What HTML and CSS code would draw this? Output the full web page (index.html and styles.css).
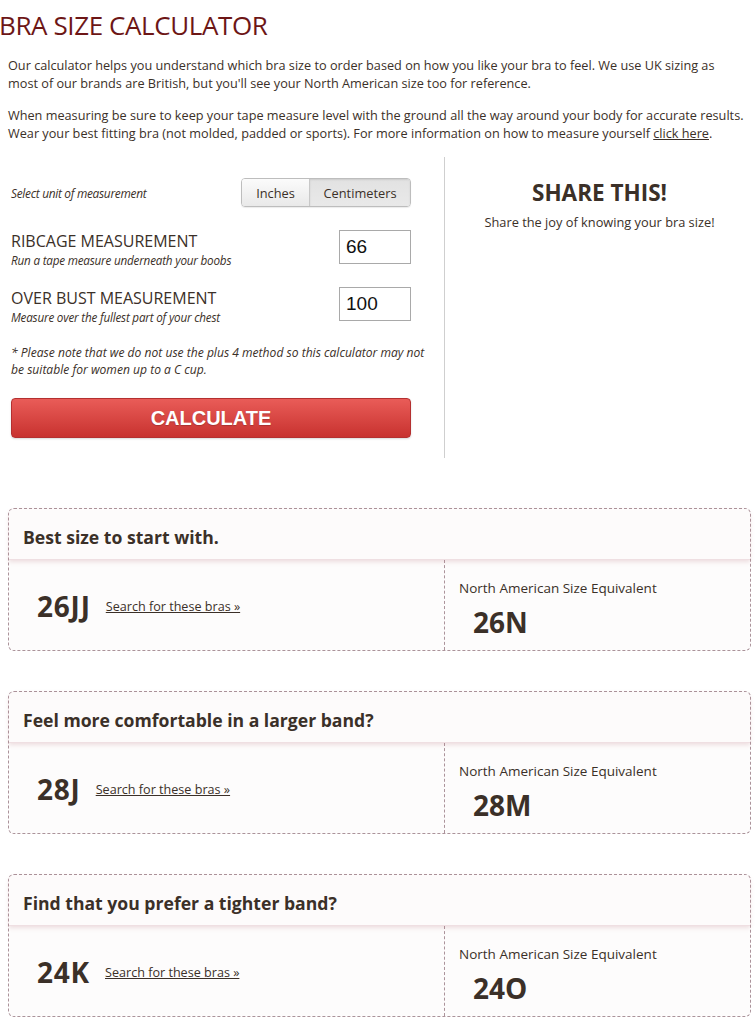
FILE: index.html
```html
<!DOCTYPE html>
<html>
<head>
<meta charset="utf-8">
<link rel="stylesheet" href="styles.css">
</head>
<body>
<div class="page">
  <h1 class="title">BRA SIZE CALCULATOR</h1>
  <p class="intro">Our calculator helps you understand which bra size to order based on how you like your bra to feel. We use UK sizing as<br>most of our brands are British, but you'll see your North American size too for reference.</p>
  <p class="intro">When measuring be sure to keep your tape measure level with the ground all the way around your body for accurate results.<br>Wear your best fitting bra (not molded, padded or sports). For more information on how to measure yourself <a href="#">click here</a>.</p>

  <div class="calc">
    <div class="calc-form">
      <div class="unit-row">
        <span class="unit-label">Select unit of measurement</span>
        <div class="toggle">
          <span class="toggle-btn">Inches</span>
          <span class="toggle-btn active">Centimeters</span>
        </div>
      </div>
      <div class="field">
        <div class="field-text">
          <div class="field-name">RIBCAGE MEASUREMENT</div>
          <div class="field-hint">Run a tape measure underneath your boobs</div>
        </div>
        <div class="input">66</div>
      </div>
      <div class="field">
        <div class="field-text">
          <div class="field-name">OVER BUST MEASUREMENT</div>
          <div class="field-hint">Measure over the fullest part of your chest</div>
        </div>
        <div class="input">100</div>
      </div>
      <p class="note">* Please note that we do not use the plus 4 method so this calculator may not be suitable for women up to a C cup.</p>
      <div class="calc-btn">CALCULATE</div>
    </div>
    <div class="share">
      <div class="share-title">SHARE THIS!</div>
      <div class="share-text">Share the joy of knowing your bra size!</div>
    </div>
  </div>

  <div class="card">
    <div class="card-head">Best size to start with.</div>
    <div class="card-body">
      <div class="card-uk"><span class="size">26JJ</span><a href="#" class="search">Search for these bras »</a></div>
      <div class="card-na"><div class="na-label">North American Size Equivalent</div><div class="na-size">26N</div></div>
    </div>
  </div>

  <div class="card">
    <div class="card-head">Feel more comfortable in a larger band?</div>
    <div class="card-body">
      <div class="card-uk"><span class="size">28J</span><a href="#" class="search">Search for these bras »</a></div>
      <div class="card-na"><div class="na-label">North American Size Equivalent</div><div class="na-size">28M</div></div>
    </div>
  </div>

  <div class="card">
    <div class="card-head">Find that you prefer a tighter band?</div>
    <div class="card-body">
      <div class="card-uk"><span class="size">24K</span><a href="#" class="search">Search for these bras »</a></div>
      <div class="card-na"><div class="na-label">North American Size Equivalent</div><div class="na-size">24O</div></div>
    </div>
  </div>
</div>
</body>
</html>
```

FILE: styles.css
```css
* { box-sizing: border-box; }
html, body { margin: 0; padding: 0; background: #fff; }
body {
  font-family: "Open Sans", "Liberation Sans", sans-serif;
  color: #3b3028;
  font-size: 12px;
}
.page { width: 756px; padding: 0 0 20px 8px; }
.title {
  margin: 8px 0 0 -9px;
  font-weight: 400;
  font-size: 26px;
  line-height: 34px;
  color: #6d1616;
  letter-spacing: -0.4px;
}
.intro {
  margin: 14px 0 0 0;
  font-size: 12.7px;
  line-height: 18px;
  white-space: nowrap;
}
.intro + .intro { margin-top: 14px; }
.intro a { color: #3b3028; text-decoration: underline; }

.calc { display: flex; margin-top: 15px; }
.calc-form {
  width: 437px;
  border-right: 1px solid #cfcfcf;
  padding: 21px 33px 20px 3px;
}
.unit-row { display: flex; justify-content: space-between; align-items: center; }
.unit-label { font-style: italic; font-size: 11.9px; letter-spacing: -0.3px; }
.toggle {
  display: flex;
  border: 1px solid #bdbdbd;
  border-radius: 4px;
  overflow: hidden;
  height: 29px;
  box-shadow: 0 1px 1px rgba(0,0,0,0.08);
}
.toggle-btn {
  display: flex; align-items: center; justify-content: center;
  font-size: 12.8px;
  background: linear-gradient(#fbfbfb, #e9e9e9);
  width: 67px;
}
.toggle-btn.active {
  width: 101px;
  border-left: 1px solid #c8c8c8;
  background: linear-gradient(#e2e2e2, #e9e9e9);
  box-shadow: inset 0 1px 2px rgba(0,0,0,0.1);
}
.field { display: flex; justify-content: space-between; align-items: flex-start; margin-top: 24px; }
.field + .field { margin-top: 19px; }
.field-name { font-size: 16px; line-height: 20px; text-transform: uppercase; }
.field-hint { font-style: italic; font-size: 11.7px; line-height: 18px; letter-spacing: -0.2px; }
.input {
  width: 72px; height: 34px;
  border: 1px solid #a9a9a9;
  font-family: "Liberation Sans", Arial, sans-serif;
  font-size: 19px;
  color: #111;
  padding: 5px 0 0 6px;
  margin-top: -1px;
}
.note {
  margin: 18px -18px 0 0;
  font-style: italic;
  font-size: 12.1px;
  line-height: 17px;
}
.calc-btn {
  margin-top: 20px;
  height: 40px;
  border-radius: 4px;
  background: linear-gradient(#e95c58, #c8322f);
  border: 1px solid #b43030;
  color: #fff;
  font-family: "Liberation Sans", Arial, sans-serif;
  font-weight: 700;
  font-size: 20px;
  display: flex; align-items: center; justify-content: center;
  text-shadow: 0 1px 1px rgba(0,0,0,0.2);
  box-shadow: 0 1px 2px rgba(0,0,0,0.15);
}
.share { flex: 1; text-align: center; padding-top: 22px; padding-right: 2px; }
.share-title { font-weight: 700; font-size: 22.5px; line-height: 28px; }
.share-text { font-size: 12.8px; margin-top: 6px; }

.card {
  width: 743px;
  margin-top: 50px;
  border: 1px dashed #ab939a;
  border-radius: 6px;
  background: #fdfcfc;
}
.card + .card { margin-top: 40px; }
.card-head {
  height: 51px;
  display: flex; align-items: center;
  padding: 6px 0 0 14px;
  font-weight: 700;
  font-size: 17.6px;
  background: #fdfbfb;
  border-bottom: 1px solid #efdfe2;
  box-shadow: 0 2px 4px rgba(190,130,140,0.25);
  border-radius: 6px 6px 0 0;
  position: relative;
}
.card-body { display: flex; height: 90px; }
.card-uk {
  width: 436px;
  border-right: 1px dashed #ab939a;
  display: flex; align-items: center;
  padding: 2px 0 0 28px;
}
.size { font-weight: 700; font-size: 28px; letter-spacing: 0.8px; margin-right: 15px; }
.search { color: #3b3028; font-size: 12.6px; text-decoration: underline; margin-top: 1px; }
.card-na { padding: 18px 0 0 14px; }
.na-label { font-size: 13.5px; line-height: 20px; }
.na-size { font-weight: 700; font-size: 28px; padding-left: 14px; line-height: 36px; margin-top: 6px; }
```
